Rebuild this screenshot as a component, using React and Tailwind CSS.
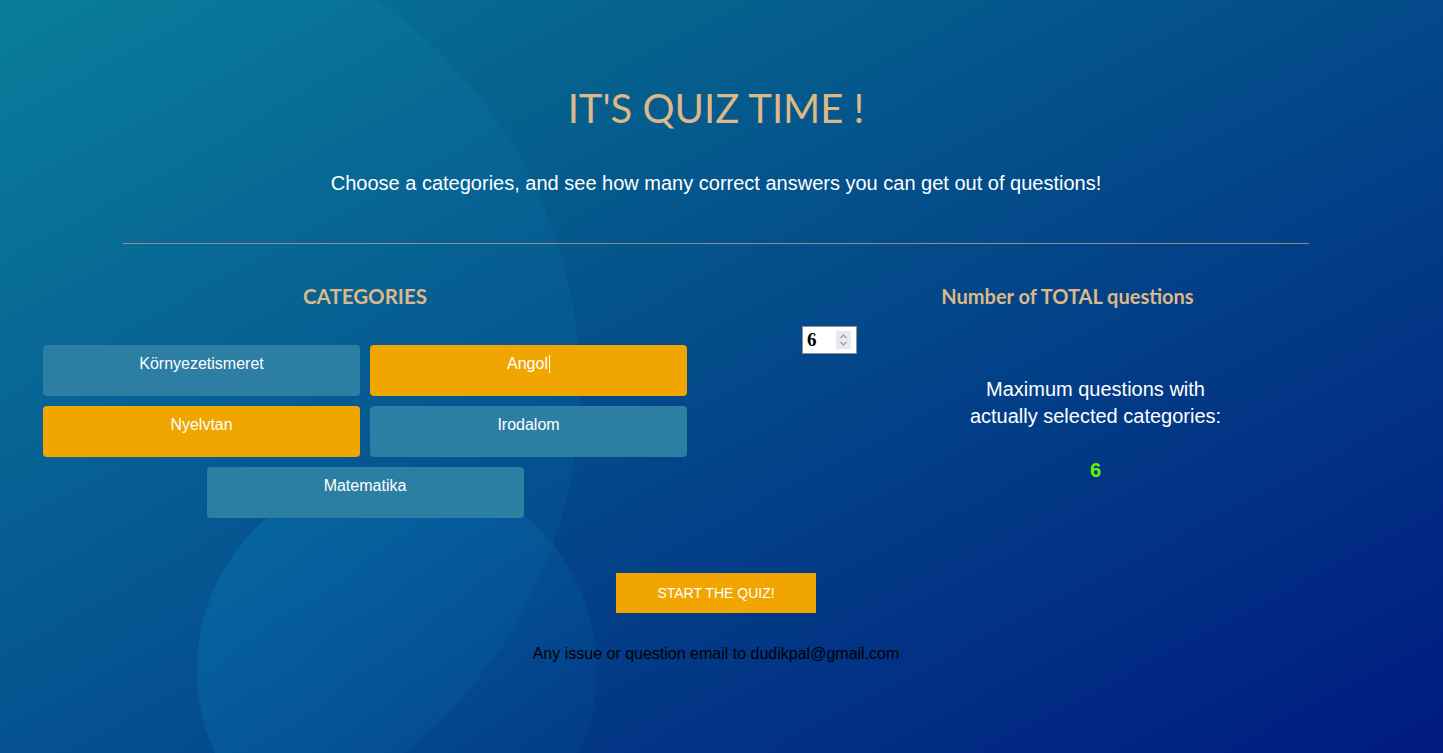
import React, { useState } from "react";

const categories = [
  { name: "Környezetismeret", selected: false },
  { name: "Angol", selected: true, caret: true },
  { name: "Nyelvtan", selected: true },
  { name: "Irodalom", selected: false },
  { name: "Matematika", selected: false },
];

const CategoryButton = ({ item, onClick }) => (
  <button
    type="button"
    onClick={onClick}
    className={`h-[51px] w-full rounded-[4px] pt-[10px] text-[16px] leading-[18px] text-white flex justify-center items-start font-['Liberation_Sans',Arial,sans-serif] ${
      item.selected ? "bg-[#f0a500]" : "bg-[#2c7fa2]"
    }`}
  >
    <span>{item.name}</span>
    {item.caret && <span className="inline-block w-px h-[18px] bg-white ml-[1px]"></span>}
  </button>
);

const App = () => {
  const [items, setItems] = useState(categories);
  const [total, setTotal] = useState(6);

  const toggle = (i) => {
    setItems(items.map((it, idx) => (idx === i ? { ...it, selected: !it.selected } : it)));
  };

  return (
    <div className="relative h-[753px] w-full overflow-hidden bg-[linear-gradient(to_bottom_right,#077993,#001a80)] font-['Liberation_Sans',Arial,sans-serif]">
      {/* background bubbles */}
      <div className="pointer-events-none absolute left-[-358px] top-[-82px] h-[938px] w-[938px] rounded-full bg-[linear-gradient(to_bottom_right,rgba(20,150,200,0.16),rgba(20,150,200,0.07))]"></div>
      <div className="pointer-events-none absolute left-[197px] top-[470px] h-[400px] w-[400px] rounded-full bg-[linear-gradient(to_bottom_right,rgba(10,140,200,0.3),rgba(10,140,200,0.02))]"></div>

      <div className="relative w-[1432px] pt-[84px]">
        <h1 className="text-center text-[40px] leading-[48px] text-[#deb887] font-['Lato',sans-serif]">
          IT'S QUIZ TIME !
        </h1>
        <p className="mt-[40px] text-center text-[20px] leading-[23px] text-white">
          Choose a categories, and see how many correct answers you can get out of questions!
        </p>
        <div className="mx-[123px] mt-[48px] border-t border-[#9a8a7c]"></div>

        <div className="mt-[40px] flex">
          <div className="w-[730px] px-[43px]">
            <h2 className="text-center text-[20.5px] leading-[24px] font-bold text-[#deb887] font-['Lato',sans-serif]">
              CATEGORIES
            </h2>
            <div className="mt-[37px] grid grid-cols-2 gap-[10px]">
              {items.slice(0, 4).map((item, i) => (
                <CategoryButton key={item.name} item={item} onClick={() => toggle(i)} />
              ))}
            </div>
            <div className="mt-[10px] flex justify-center">
              <div className="w-[317px]">
                <CategoryButton item={items[4]} onClick={() => toggle(4)} />
              </div>
            </div>
          </div>

          <div className="flex-1">
            <h2 className="pr-[27px] text-center text-[20px] leading-[24px] font-bold text-[#deb887] font-['Lato',sans-serif]">
              Number of TOTAL questions
            </h2>
            <div className="ml-[72px] mt-[18px] flex h-[28px] w-[55px] items-center justify-between border border-[#8f8f9d] bg-white pl-[4px] pr-[5px]">
              <input
                type="text"
                value={total}
                onChange={(e) => setTotal(e.target.value)}
                className="w-[26px] bg-transparent text-[19px] font-bold text-black outline-none font-['Liberation_Serif','Times_New_Roman',serif]"
              />
              <div className="flex h-[18px] w-[15px] flex-col items-center justify-center bg-[#e9e9ed]">
                <svg width="9" height="14" viewBox="0 0 9 14" fill="none" stroke="#9a9aa3" strokeWidth="1.2">
                  <path d="M1.5 5 L4.5 2 L7.5 5" />
                  <path d="M1.5 9 L4.5 12 L7.5 9" />
                </svg>
              </div>
            </div>
            <p className="mt-[22px] pl-[29px] text-center text-[20px] leading-[27px] text-white">
              Maximum questions with
              <br />
              actually selected categories:
            </p>
            <p className="mt-[29px] pl-[29px] text-center text-[20px] leading-[23px] font-bold text-[#66f500]">
              6
            </p>
          </div>
        </div>

        <div className="mt-[55px] flex justify-center">
          <button
            type="button"
            className="h-[40px] w-[200px] bg-[#f0a500] text-[14px] text-white uppercase"
          >
            START THE QUIZ!
          </button>
        </div>
        <p className="mt-[32px] text-center text-[16px] leading-[18px] text-black">
          Any issue or question email to dudikpal@gmail.com
        </p>
      </div>
    </div>
  );
};

export default App;
